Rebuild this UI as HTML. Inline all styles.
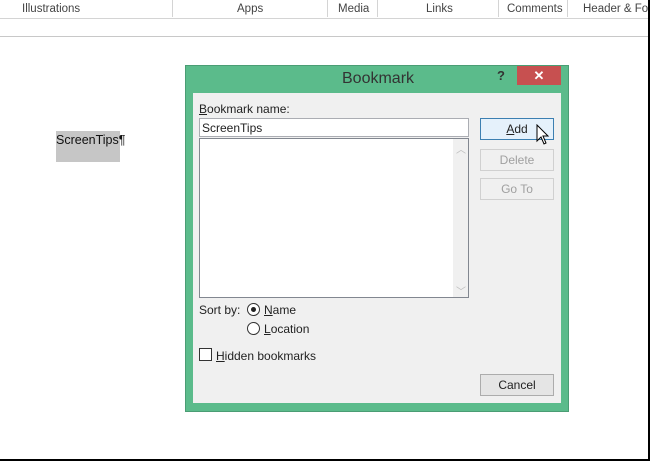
<!DOCTYPE html><html><head><style>
body{margin:0;width:650px;height:461px;position:relative;overflow:hidden;background:#fff;font-family:"Segoe UI","Liberation Sans",sans-serif;font-size:12px;color:#222}
.a{position:absolute}
.tab{top:3px;font-size:11.5px;color:#444}
.sep{top:0;width:1px;height:17px;background:#d4d4d4}
.btn{position:absolute;left:480px;width:72px;height:20px;border:1px solid #acacac;background:#e5e5e5;text-align:center;line-height:21px;font-size:12px}
.dis{border-color:#d0d0d0;background:#f0f0f0;color:#a0a0a0}
u{text-decoration:underline}
</style></head><body>
<div class="a tab" style="left:22px">Illustrations</div>
<div class="a sep" style="left:172px"></div>
<div class="a tab" style="left:237px">Apps</div>
<div class="a sep" style="left:327px"></div>
<div class="a tab" style="left:338px">Media</div>
<div class="a sep" style="left:377px"></div>
<div class="a tab" style="left:426px">Links</div>
<div class="a sep" style="left:498px"></div>
<div class="a tab" style="left:507px">Comments</div>
<div class="a sep" style="left:567px"></div>
<div class="a tab" style="left:583px">Header &amp; Fo</div>
<div class="a" style="left:0;top:18px;width:650px;height:1px;background:#d4d4d4"></div>
<div class="a" style="left:0;top:36px;width:650px;height:1px;background:#c8c8c8"></div>
<div class="a" style="left:648px;top:0;width:2px;height:461px;background:#000"></div>
<div class="a" style="left:0;top:459px;width:650px;height:2px;background:#000"></div>
<div class="a" style="left:56px;top:131px;width:64px;height:31px;background:#c6c6c6"></div>
<div class="a" style="left:56px;top:133px;font-size:12.5px;color:#111">ScreenTips¶</div>

<div class="a" style="left:185px;top:65px;width:382px;height:345px;background:#5bbb8b;border:1px solid #4a9d74"></div>
<div class="a" style="left:342px;top:70px;font-size:16px;color:#333">Bookmark</div>
<div class="a" style="left:497px;top:68px;font-size:13px;font-weight:bold;color:#333">?</div>
<div class="a" style="left:517px;top:66px;width:44px;height:19px;background:#c75050;color:#fff;text-align:center;line-height:19px;font-size:13px;font-weight:bold">✕</div>
<div class="a" style="left:193px;top:93px;width:368px;height:310px;background:#f0f0f0"></div>
<div class="a" style="left:199px;top:102px"><u>B</u>ookmark name:</div>
<div class="a" style="left:199px;top:118px;width:268px;height:17px;background:#fff;border:1px solid #abadb3"></div>
<div class="a" style="left:202px;top:121px">ScreenTips</div>
<div class="a" style="left:199px;top:138px;width:268px;height:158px;background:#fff;border:1px solid #828790"></div>
<div class="a" style="left:453px;top:139px;width:15px;height:158px;background:#f0f0f0"></div>
<div class="a" style="left:456px;top:141px;color:#bbb;font-size:10px">︿</div>
<div class="a" style="left:456px;top:283px;color:#bbb;font-size:10px">﹀</div>
<div class="btn" style="top:118px;background:#e5f1fb;border-color:#3c7fb1"><u>A</u>dd</div>
<div class="btn dis" style="top:149px">Delete</div>
<div class="btn dis" style="top:178px">Go To</div>
<div class="btn" style="top:374px">Cancel</div>
<svg class="a" style="left:536px;top:124px" width="14" height="22" viewBox="0 0 14 22"><path d="M1 1V17L5 13L8 20L10 19L7 12H12Z" fill="#fff" stroke="#000" stroke-width="1"/></svg>
<div class="a" style="left:199px;top:303px">Sort by:</div>
<div class="a" style="left:247px;top:303px;width:11px;height:11px;border:1px solid #333;border-radius:50%;background:#fff"></div>
<div class="a" style="left:251px;top:307px;width:5px;height:5px;border-radius:50%;background:#222"></div>
<div class="a" style="left:264px;top:303px"><u>N</u>ame</div>
<div class="a" style="left:247px;top:322px;width:11px;height:11px;border:1px solid #333;border-radius:50%;background:#fff"></div>
<div class="a" style="left:264px;top:322px"><u>L</u>ocation</div>
<div class="a" style="left:199px;top:348px;width:11px;height:11px;border:1px solid #333;background:#fff"></div>
<div class="a" style="left:216px;top:349px"><u>H</u>idden bookmarks</div>
</body></html>
